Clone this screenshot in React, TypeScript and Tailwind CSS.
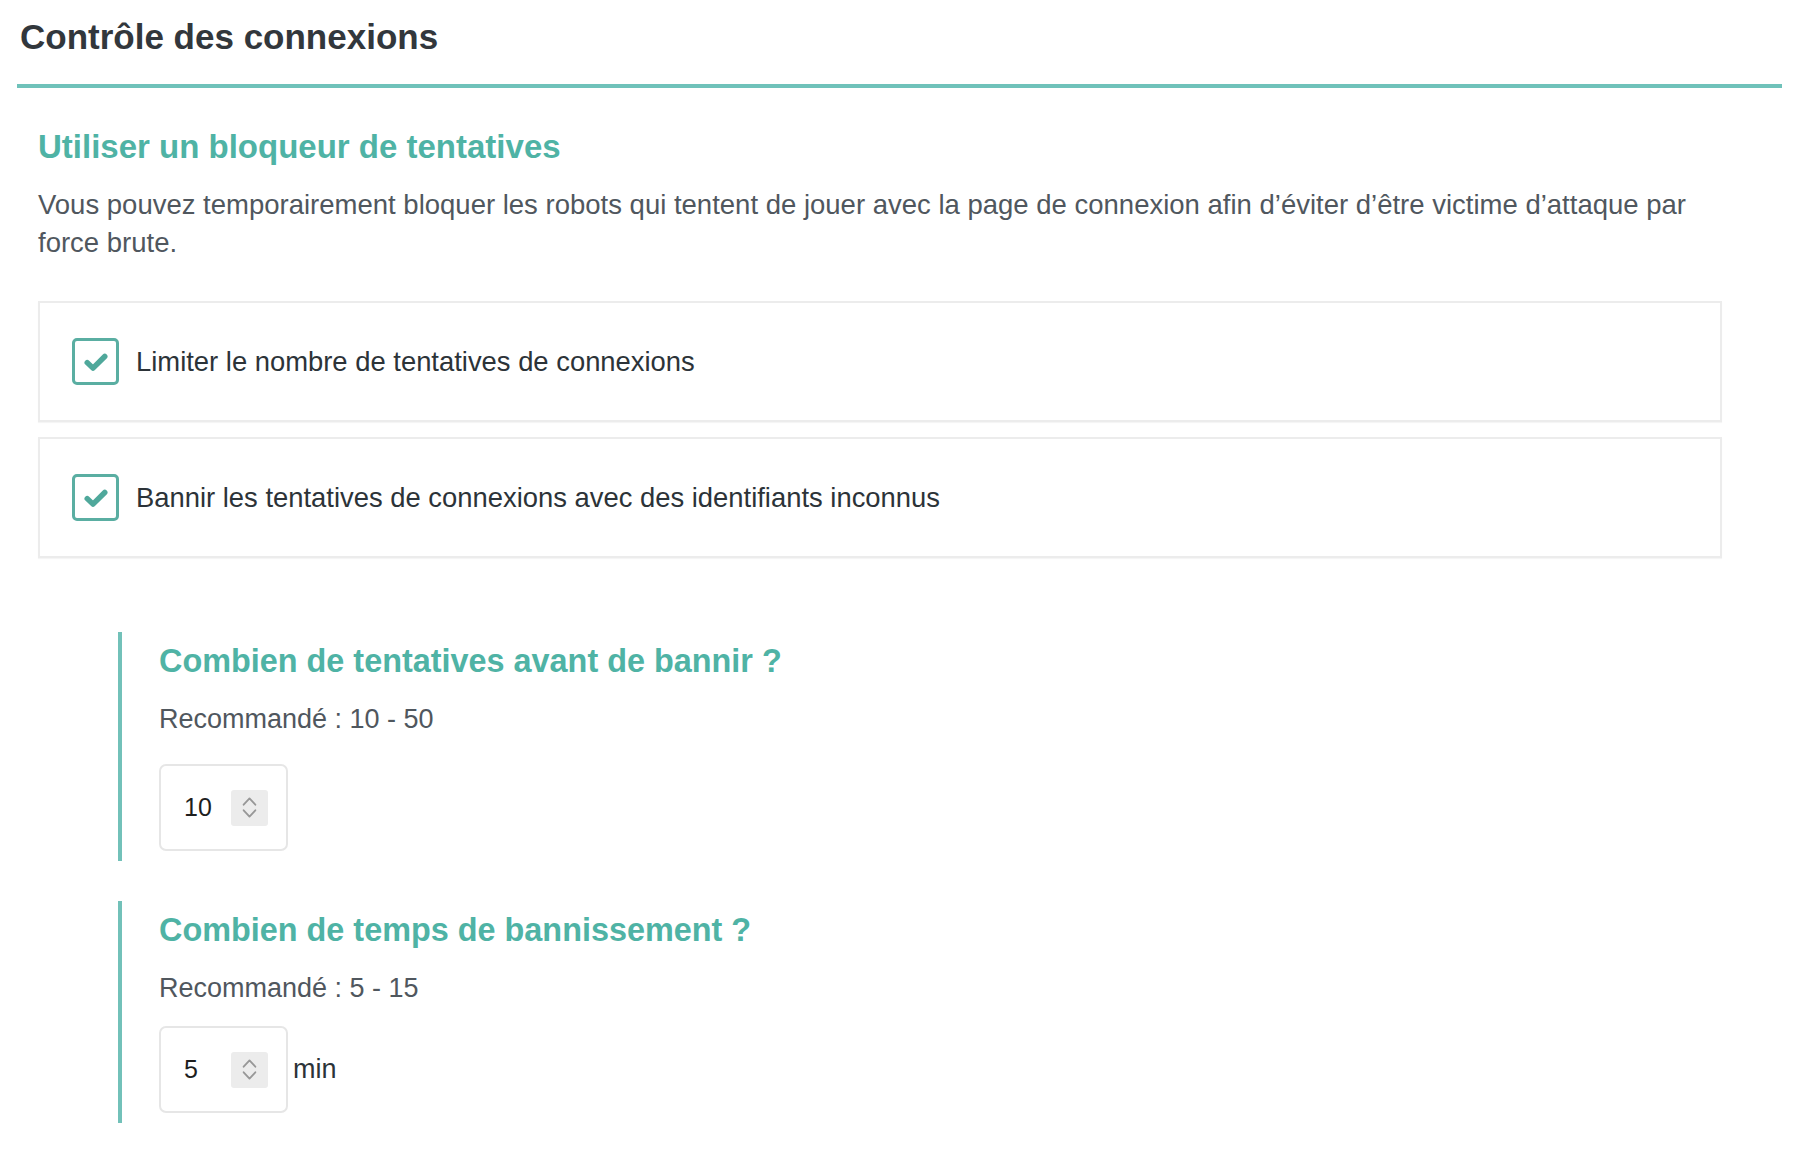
import React from "react";

function CheckBox() {
  return (
    <span className="flex h-[47px] w-[47px] shrink-0 items-center justify-center rounded-[5px] border-[3px] border-[#5aaea2] bg-white">
      <svg viewBox="0 0 24 24" className="h-[30px] w-[30px]" fill="none">
        <path
          d="M5 12.5l4.6 4.4L19 7.6"
          stroke="#4fa89b"
          strokeWidth="4.4"
          strokeLinecap="round"
          strokeLinejoin="round"
        />
      </svg>
    </span>
  );
}

function OptionRow({ label }: { label: string }) {
  return (
    <label className="flex h-[121px] items-center gap-[17px] border-2 border-[#ececec] bg-white pl-[32px] shadow-[0_1px_1px_rgba(0,0,0,0.04)]">
      <CheckBox />
      <span className="text-[27.4px] text-[#2c3338]">{label}</span>
    </label>
  );
}

function Spinner() {
  return (
    <span className="flex h-[36px] w-[37px] flex-col items-center justify-center gap-[3px] rounded-[3px] bg-[#ececec]">
      <svg viewBox="0 0 16 9" className="h-[10px] w-[17px]" fill="none">
        <path d="M2.5 8l5.5-6 5.5 6" stroke="#979797" strokeWidth="1.7" strokeLinecap="round" strokeLinejoin="round" />
      </svg>
      <svg viewBox="0 0 16 9" className="h-[10px] w-[17px]" fill="none">
        <path d="M2.5 1l5.5 6 5.5-6" stroke="#979797" strokeWidth="1.7" strokeLinecap="round" strokeLinejoin="round" />
      </svg>
    </span>
  );
}

function NumberField({ value, unit }: { value: string; unit?: string }) {
  return (
    <div className="flex items-center gap-[5px]">
      <div className="flex h-[87px] w-[129px] items-center rounded-[7px] border-2 border-[#e6e6e6] bg-white pl-[23px]">
        <span className="w-[47px] text-[25px] text-[#1e1e1e]">{value}</span>
        <Spinner />
      </div>
      {unit && <span className="text-[27px] text-[#2c3338]">{unit}</span>}
    </div>
  );
}

function SubSetting({
  title,
  hint,
  value,
  unit,
  fieldGap,
}: {
  title: string;
  hint: string;
  value: string;
  unit?: string;
  fieldGap: string;
}) {
  return (
    <section className="border-l-4 border-[#72c1b9] pb-[10px] pl-[37px] pt-[10px]">
      <h3 className="text-[32.4px] font-bold leading-[38px] text-[#4fb3a5]">{title}</h3>
      <p className="mt-[24px] text-[27px] leading-[30px] text-[#50575e]">{hint}</p>
      <div className={fieldGap}>
        <NumberField value={value} unit={unit} />
      </div>
    </section>
  );
}

export default function App() {
  return (
    <main className="min-h-screen bg-white px-[17px] pt-[17px] font-['Liberation_Sans',Arial,sans-serif]">
      <h1 className="pl-[3px] text-[35px] font-bold leading-[40px] text-[#32373c]">
        Contrôle des connexions
      </h1>
      <div className="mt-[27px] h-[4px] w-[1765px] bg-[#6fc2ba]" />

      <div className="max-w-[1705px] pl-[21px]">
        <h2 className="mt-[40px] text-[33px] font-bold leading-[38px] text-[#4fb3a5]">
          Utiliser un bloqueur de tentatives
        </h2>
        <p className="mt-[20px] text-[27.5px] leading-[38px] text-[#50575e]">
          Vous pouvez temporairement bloquer les robots qui tentent de jouer avec la page de
          connexion afin d’éviter d’être victime d’attaque par force brute.
        </p>

        <div className="mt-[39px] flex w-[1684px] flex-col gap-[15px]">
          <OptionRow label="Limiter le nombre de tentatives de connexions" />
          <OptionRow label="Bannir les tentatives de connexions avec des identifiants inconnus" />
        </div>

        <div className="ml-[80px] mt-[74px] flex flex-col gap-[40px]">
          <SubSetting
            title="Combien de tentatives avant de bannir ?"
            hint="Recommandé : 10 - 50"
            value="10"
            fieldGap="mt-[30px]"
          />
          <SubSetting
            title="Combien de temps de bannissement ?"
            hint="Recommandé : 5 - 15"
            value="5"
            unit="min"
            fieldGap="mt-[23px]"
          />
        </div>
      </div>
    </main>
  );
}
